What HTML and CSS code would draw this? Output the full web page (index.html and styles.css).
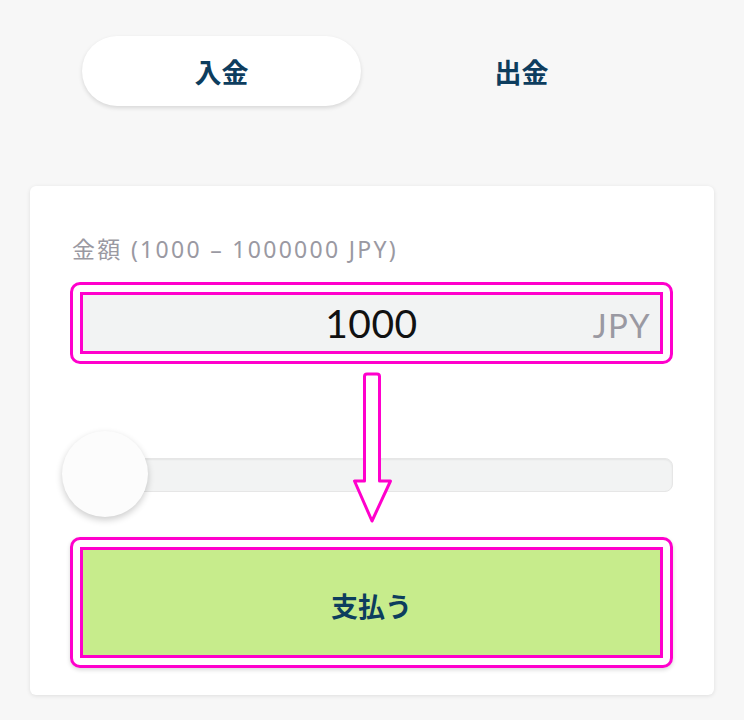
FILE: index.html
```html
<!DOCTYPE html>
<html lang="ja">
<head>
<meta charset="utf-8">
<title>入金</title>
<link rel="stylesheet" href="styles.css">
</head>
<body>
<div class="page">
  <div class="tabs">
    <div class="tab tab-active">入金</div>
    <div class="tab">出金</div>
  </div>
  <div class="card">
    <div class="label">金額 (1000 – 1000000 JPY)</div>
    <div class="hl-frame">
      <div class="amount-box">
        <span class="amount">1000</span>
        <span class="currency">JPY</span>
      </div>
    </div>
    <div class="slider">
      <div class="track"></div>
      <div class="thumb"></div>
    </div>
    <div class="hl-frame btn-frame">
      <div class="pay-btn">支払う</div>
    </div>
    <svg class="arrow" width="46" height="158" viewBox="0 0 46 158">
      <path d="M14.5 111 L14.5 6.5 Q14.5 4 17 4 L27 4 Q29.5 4 29.5 6.5 L29.5 111 L40.5 111 L22 151 L4.5 111 Z" fill="#ffffff" stroke="#ff00cc" stroke-width="3" stroke-linejoin="round"/>
    </svg>
  </div>
</div>
</body>
</html>
```
FILE: styles.css
```css
html, body {
  margin: 0;
  padding: 0;
  background: #f7f7f7;
}
body {
  font-family: Lato, "Noto Sans CJK JP", sans-serif;
  width: 744px;
  height: 720px;
  overflow: hidden;
}
.page {
  padding-top: 36px;
}
.tabs {
  display: flex;
  gap: 21px;
  padding-left: 82px;
}
.tab {
  width: 279px;
  height: 70px;
  border-radius: 35px;
  display: flex;
  align-items: center;
  justify-content: center;
  font-family: "Noto Sans CJK JP", sans-serif;
  font-weight: 700;
  font-size: 27px;
  color: #0d3d5e;
}
.tab-active {
  background: #ffffff;
  box-shadow: 0 2px 4px rgba(0, 0, 0, 0.13);
}
.card {
  position: relative;
  margin: 80px 0 0 30px;
  width: 684px;
  box-sizing: border-box;
  height: 509px;
  background: #ffffff;
  border-radius: 6px;
  box-shadow: 0 1px 4px rgba(0, 0, 0, 0.1);
  padding: 49px 41px 27px 40px;
}
.label {
  font-family: "Noto Sans", "Noto Sans CJK JP", sans-serif;
  font-size: 23px;
  line-height: 28px;
  letter-spacing: 2.3px;
  color: #9a99a2;
  padding-left: 2px;
  margin-bottom: 19px;
  white-space: nowrap;
}
.hl-frame {
  border: 3px solid #ff00cc;
  border-radius: 10px;
  padding: 7px;
  background: #ffffff;
}
.amount-box {
  position: relative;
  height: 62px;
  box-sizing: border-box;
  border: 3px solid #ff00cc;
  background: #f2f3f3;
  display: flex;
  align-items: center;
  justify-content: center;
}
.amount {
  font-size: 39px;
  color: #111111;
  letter-spacing: 0.5px;
}
.currency {
  position: absolute;
  right: 9px;
  top: 50%;
  transform: translateY(-46%);
  font-size: 33px;
  color: #9a99a2;
  letter-spacing: 1.5px;
}
.slider {
  position: relative;
  height: 86px;
  box-sizing: border-box;
  padding-top: 27px;
  margin-top: 67px;
}
.track {
  margin-left: 2px;
  height: 34px;
  box-sizing: border-box;
  border-radius: 8px;
  background: #f2f3f3;
  border: 1px solid #e6e6e6;
  box-shadow: inset 0 1px 2px rgba(0, 0, 0, 0.06);
}
.thumb {
  position: absolute;
  left: -8px;
  top: 0;
  width: 86px;
  height: 86px;
  border-radius: 50%;
  background: #fcfcfc;
  box-shadow: 0 3px 7px rgba(0, 0, 0, 0.2);
}
.btn-frame {
  margin-top: 20px;
  box-shadow: 0 2px 4px rgba(0, 0, 0, 0.15);
}
.pay-btn {
  height: 111px;
  box-sizing: border-box;
  border: 3px solid #ff00cc;
  background: #c7ec8c;
  display: flex;
  align-items: center;
  justify-content: center;
  padding-top: 6px;
  font-family: "Noto Sans CJK JP", sans-serif;
  font-weight: 700;
  font-size: 27px;
  color: #0d3d5e;
}
.arrow {
  position: absolute;
  left: 320px;
  top: 184px;
}
```
